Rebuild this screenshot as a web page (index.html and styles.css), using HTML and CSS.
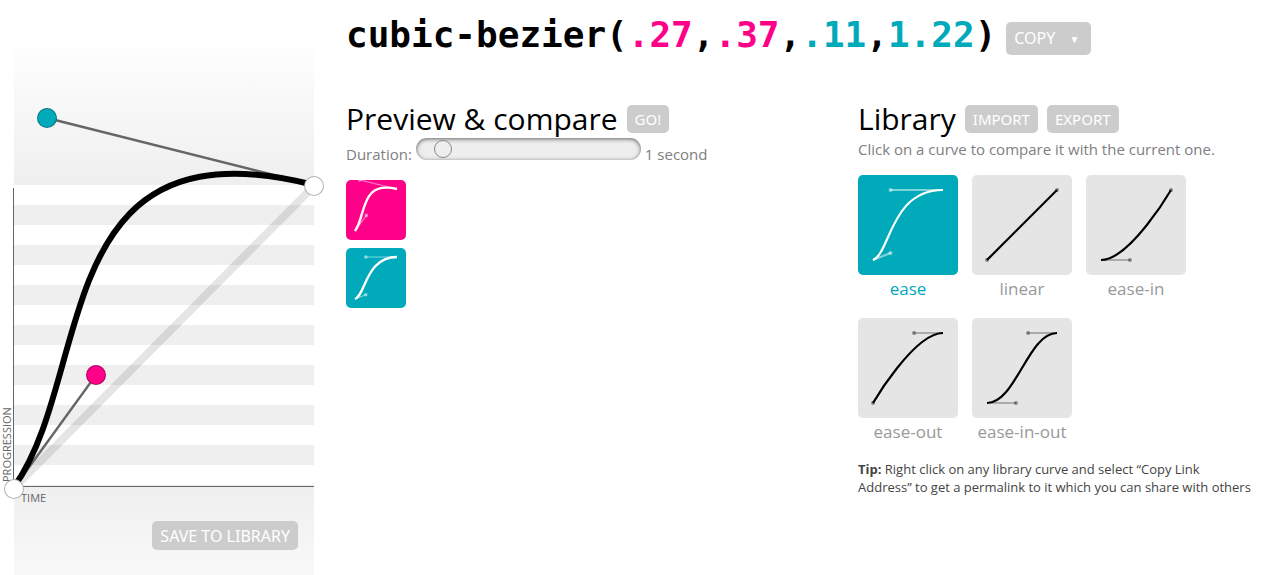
FILE: index.html
```html
<!DOCTYPE html>
<html lang="en">
<head>
<meta charset="utf-8">
<title>cubic-bezier(.27,.37,.11,1.22)</title>
<link rel="stylesheet" href="styles.css">
</head>
<body>
<section class="editor" aria-label="Curve editor">
  <div class="plane">
    <span class="axis-y">Progression</span>
    <span class="axis-x">Time</span>
    <svg class="curve" width="328" height="575" aria-hidden="true">
      <line class="diagonal" x1="14" y1="488" x2="314" y2="186"/>
      <line class="arm" x1="14" y1="488" x2="96" y2="375"/>
      <line class="arm" x1="314" y1="185" x2="47" y2="118"/>
      <path class="bezier" d="M14 487C95 374 47 117 314 185"/>
    </svg>
    <button class="handle start" type="button" aria-label="Start point"></button>
    <button class="handle p1" type="button" aria-label="First control point"></button>
    <button class="handle p2" type="button" aria-label="Second control point"></button>
    <button class="handle end" type="button" aria-label="End point"></button>
  </div>
  <button class="btn save" type="button">Save to library</button>
</section>
<main class="content">
  <header class="title">
    <h1>cubic-bezier(<span class="pink">.27</span>,<span class="pink">.37</span>,<span class="teal">.11</span>,<span class="teal">1.22</span>)</h1>
    <button class="btn copy" type="button">Copy <span class="caret">▼</span></button>
  </header>
  <div class="columns">
    <section class="preview">
      <div class="heading">
        <h2>Preview &amp; compare</h2>
        <button class="btn" type="button">Go!</button>
      </div>
      <div class="duration">
        <label for="duration">Duration:</label>
        <input id="duration" type="range" min="0" max="100" value="9">
        <output for="duration">1 second</output>
      </div>
      <svg class="mini current" viewBox="0 0 100 100" role="img" aria-label="Current curve">
        <path class="arms" d="M15 85L34 59M85 15L23 0"/><circle cx="34" cy="59" r="3"/><circle cx="23" cy="0" r="3"/>
        <path class="line" d="M15 85C34 59 23 0 85 15"/>
      </svg>
      <svg class="mini compare" viewBox="0 0 100 100" role="img" aria-label="Compared curve">
        <path class="arms" d="M15 85L33 78M85 15L33 15"/><circle cx="33" cy="78" r="3"/><circle cx="33" cy="15" r="3"/>
        <path class="line" d="M15 85C33 78 33 15 85 15"/>
      </svg>
    </section>
    <section class="library">
      <div class="heading">
        <h2>Library</h2>
        <button class="btn" type="button">Import</button>
        <button class="btn" type="button">Export</button>
      </div>
      <p class="hint">Click on a curve to compare it with the current one.</p>
      <nav class="curves">
        <a class="card selected" href="#.25,.1,.25,1">
          <svg viewBox="0 0 100 100" aria-hidden="true"><path class="arms" d="M15 85L32.500 78M85 15H32.500"/><circle cx="32.500" cy="78" r="2"/><circle cx="32.500" cy="15" r="2"/><path class="line" d="M15 85C32.500 78 32.500 15 85 15"/></svg>
          <span>ease</span>
        </a>
        <a class="card" href="#0,0,1,1">
          <svg viewBox="0 0 100 100" aria-hidden="true"><circle cx="15" cy="85" r="2"/><circle cx="85" cy="15" r="2"/><path class="line" d="M15 85L85 15"/></svg>
          <span>linear</span>
        </a>
        <a class="card" href="#.42,0,1,1">
          <svg viewBox="0 0 100 100" aria-hidden="true"><path class="arms" d="M15 85H44"/><circle cx="44" cy="85" r="2"/><circle cx="85" cy="15" r="2"/><path class="line" d="M15 85C44 85 85 15 85 15"/></svg>
          <span>ease-in</span>
        </a>
        <a class="card" href="#0,0,.58,1">
          <svg viewBox="0 0 100 100" aria-hidden="true"><path class="arms" d="M85 15H56"/><circle cx="15" cy="85" r="2"/><circle cx="56" cy="15" r="2"/><path class="line" d="M15 85C15 85 56 15 85 15"/></svg>
          <span>ease-out</span>
        </a>
        <a class="card" href="#.42,0,.58,1">
          <svg viewBox="0 0 100 100" aria-hidden="true"><path class="arms" d="M15 85H44M85 15H56"/><circle cx="44" cy="85" r="2"/><circle cx="56" cy="15" r="2"/><path class="line" d="M15 85C44 85 56 15 85 15"/></svg>
          <span>ease-in-out</span>
        </a>
      </nav>
      <p class="tip"><strong>Tip:</strong> Right click on any library curve and select “Copy Link Address” to get a permalink to it which you can share with others</p>
    </section>
  </div>
</main>
</body>
</html>
```
FILE: styles.css
```css
* { box-sizing: border-box; }

body {
  display: flex;
  min-height: 100vh;
  margin: 0;
  background: #fff;
  color: #000;
  font-family: "Open Sans", "Noto Sans", sans-serif;
}

h1, h2, p { margin: 0; font-weight: 400; }

.pink { color: #f08; }
.teal { color: #0ab; }

.btn {
  height: 28px;
  padding: 0 8px;
  border: 0;
  border-radius: 5px;
  background: #ccc;
  color: #fff;
  font: 15px/28px "Noto Sans", sans-serif;
  text-transform: uppercase;
  white-space: nowrap;
}

/* Curve editor */
.editor {
  display: flex;
  flex-direction: column;
  flex: none;
  width: 300px;
  margin-left: 14px;
  background:
    linear-gradient(#fff, #efefef) 0 35px / 100% 150px no-repeat,
    linear-gradient(#efefef, #fff) 0 485px / 100% 150px no-repeat,
    repeating-linear-gradient(#fff 0 20px, #efefef 20px 40px) 0 185px / 100% 300px no-repeat;
}

.plane { position: relative; height: 521px; }

.curve { position: absolute; top: 0; left: -14px; fill: none; }
.diagonal { stroke: #000; stroke-opacity: .1; stroke-width: 8; }
.arm { stroke: #666; stroke-width: 2.4; }
.bezier { stroke: #000; stroke-width: 6; }

.handle {
  position: absolute;
  width: 20px;
  height: 20px;
  padding: 0;
  border: 1px solid rgba(0, 0, 0, .3);
  border-radius: 50%;
  background: #fff;
}
.start { left: -10px; top: 479px; }
.p1 { left: 72px; top: 365px; background: #f08; }
.p2 { left: 23px; top: 108px; background: #0ab; }
.end { left: 290px; top: 176px; }

.axis-x, .axis-y {
  position: absolute;
  color: #666;
  font-size: 11px;
  line-height: 12px;
  text-transform: uppercase;
}
.axis-x { top: 486px; left: 0; width: 100%; padding: 5px 7px; border-top: 1px solid #666; }
.axis-y {
  top: 188px;
  left: -13px;
  height: 299px;
  padding-top: 5px;
  border-left: 1px solid #666;
  writing-mode: vertical-rl;
  transform: rotate(180deg);
}

.save { align-self: flex-end; height: 29px; margin-right: 16px; font-size: 16px; }

/* Content */
.content { flex: 1; padding: 10px 24px 10px 32px; }

.title { display: flex; align-items: center; gap: 10px; height: 56px; }
.title h1 { padding-bottom: 6px; font: bold 36px/48px "DejaVu Sans Mono", monospace; }
.copy { height: 33px; font-size: 16px; }
.caret { margin: 0 4px 0 10px; font-size: 10px; vertical-align: 1px; }

.columns { display: grid; grid-template-columns: 1fr 395px; padding-top: 32px; }

.heading { display: flex; align-items: center; gap: 9px; height: 42px; }
.heading h2 { font-size: 30px; line-height: 42px; white-space: nowrap; }

.duration { display: flex; align-items: center; gap: 4px; height: 24px; color: #808080; font-size: 15px; line-height: 24px; }
.duration label, .duration output { padding-top: 4px; }
.duration input {
  appearance: none;
  width: 225px;
  height: 22px;
  margin: 0 0 6px;
  border-radius: 11px;
  background: #eee;
  box-shadow: inset 0 1px 4px rgba(0, 0, 0, .6);
}
.duration input::-webkit-slider-thumb {
  appearance: none;
  width: 18px;
  height: 18px;
  border: 1px solid #888;
  border-radius: 50%;
  background: #eee;
}

.mini { display: block; width: 60px; height: 60px; margin-bottom: 8px; border-radius: 5px; }
.mini.current { margin-top: 16px; }
.current { background: #f08; }
.compare { background: #0ab; }

.line { fill: none; stroke: currentColor; stroke-width: 2.2; }
.arms { fill: none; stroke: currentColor; stroke-width: 2; opacity: .25; }
circle { fill: currentColor; opacity: .4; }
.mini { color: #fff; }
.mini .line { stroke-width: 4; }
.mini .arms, .mini circle { opacity: .5; }

.hint { color: #808080; font-size: 15px; line-height: 18px; }

.curves { display: flex; flex-wrap: wrap; gap: 15px 14px; padding-top: 17px; }
.card { width: 100px; color: #999; font-size: 17px; line-height: 28px; text-align: center; text-decoration: none; }
.card svg { display: block; border-radius: 5px; background: #e5e5e5; color: #000; }
.card.selected { color: #0ab; }
.card.selected svg { background: #0ab; color: #fff; }
.selected .arms, .selected circle { opacity: .5; }

.tip { padding-top: 14px; color: #444; font-size: 13px; line-height: 18px; }
```
